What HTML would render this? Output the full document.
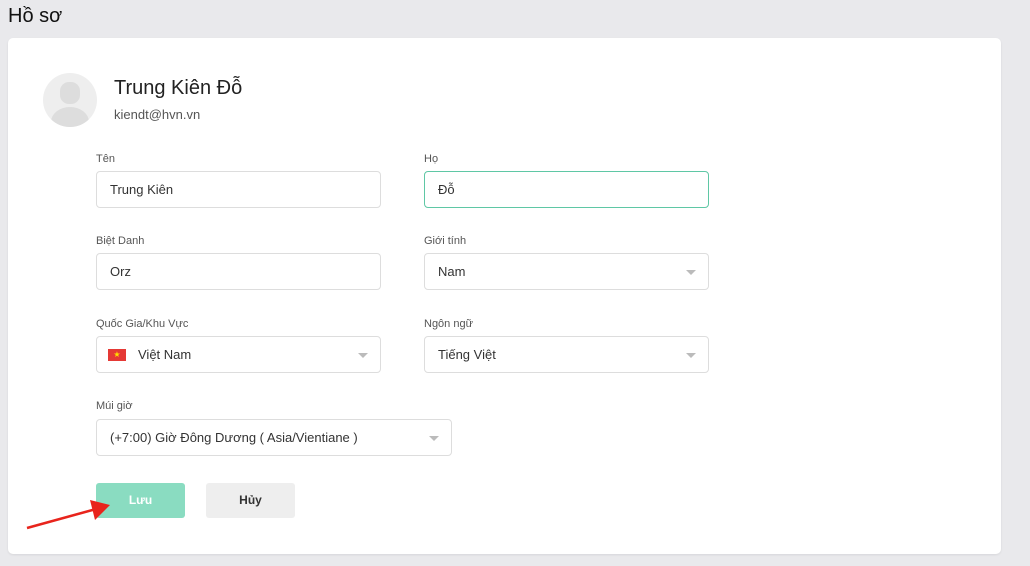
<!DOCTYPE html><html><head><meta charset="utf-8"><style>
*{box-sizing:border-box;margin:0;padding:0}
body{width:1030px;height:566px;background:#e9e9ec;font-family:"Liberation Sans",sans-serif;position:relative;overflow:hidden;color:#333}
.abs{position:absolute}
.card{left:8px;top:38px;width:993px;height:516px;background:#fff;border-radius:5px;box-shadow:0 1px 2px rgba(0,0,0,.08)}
.lbl{font-size:11px;color:#555}
.in{border:1px solid #ddd;border-radius:4px;height:37px;font-size:13px;color:#333;padding:0 13px;line-height:35px;background:#fff}
.car{position:absolute;right:12px;top:16px;width:0;height:0;border-left:5px solid transparent;border-right:5px solid transparent;border-top:5px solid #bbb}
</style></head><body>
<div class="abs" style="left:8px;top:5px;font-size:20px;color:#111">Hồ sơ</div>
<div class="abs card"></div>
<div class="abs" style="left:43px;top:73px;width:54px;height:54px;border-radius:50%;background:#eee;overflow:hidden">
<div class="abs" style="left:17px;top:9px;width:20px;height:22px;border-radius:9px;background:#ddd"></div>
<div class="abs" style="left:8px;top:34px;width:38px;height:30px;border-radius:50%;background:#ddd"></div></div>
<div class="abs" style="left:114px;top:77px;font-size:20px;color:#222">Trung Kiên Đỗ</div>
<div class="abs" style="left:114px;top:107px;font-size:13px;color:#555">kiendt@hvn.vn</div>

<div class="abs lbl" style="left:96px;top:153px">Tên</div>
<div class="abs in" style="left:96px;top:171px;width:285px">Trung Kiên</div>
<div class="abs lbl" style="left:424px;top:153px">Họ</div>
<div class="abs in" style="left:424px;top:171px;width:285px;border-color:#5fc7a5">Đỗ</div>

<div class="abs lbl" style="left:96px;top:235px">Biệt Danh</div>
<div class="abs in" style="left:96px;top:253px;width:285px">Orz</div>
<div class="abs lbl" style="left:424px;top:235px">Giới tính</div>
<div class="abs in" style="left:424px;top:253px;width:285px">Nam<span class="car"></span></div>

<div class="abs lbl" style="left:96px;top:318px">Quốc Gia/Khu Vực</div>
<div class="abs in" style="left:96px;top:336px;width:285px;padding-left:41px"><span class="abs" style="left:11px;top:12px;width:18px;height:12px;background:#e53935;color:#ffde00;font-size:8px;line-height:12px;text-align:center">★</span>Việt Nam<span class="car"></span></div>
<div class="abs lbl" style="left:424px;top:318px">Ngôn ngữ</div>
<div class="abs in" style="left:424px;top:336px;width:285px">Tiếng Việt<span class="car"></span></div>

<div class="abs lbl" style="left:96px;top:400px">Múi giờ</div>
<div class="abs in" style="left:96px;top:419px;width:356px">(+7:00) Giờ Đông Dương ( Asia/Vientiane )<span class="car"></span></div>

<div class="abs" style="left:96px;top:483px;width:89px;height:35px;background:#8adcc1;border-radius:3px;color:#fff;font-size:12px;font-weight:bold;text-align:center;line-height:35px">Lưu</div>
<div class="abs" style="left:206px;top:483px;width:89px;height:35px;background:#eee;border-radius:3px;color:#333;font-size:12px;font-weight:bold;text-align:center;line-height:35px">Hủy</div>

<svg class="abs" style="left:0;top:0" width="1030" height="566"><line x1="27" y1="528" x2="96" y2="509" stroke="#e8241c" stroke-width="2.5"/><polygon points="110,505 90,500 95,520" fill="#e8241c"/></svg>
</body></html>
